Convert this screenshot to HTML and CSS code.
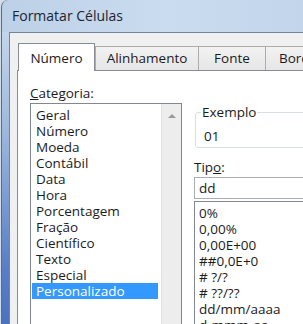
FILE: index.html
```html
<!DOCTYPE html>
<html lang="pt">
<head>
    <meta charset="UTF-8">
    <meta name="viewport" content="width=device-width, initial-scale=1.0">
    <title>Formatar Células</title>
    <link rel="stylesheet" href="styles.css">
</head>
<body>
    <div class="window">
        <div class="titlebar">Formatar Células</div>
        <div class="window-body">
            <div class="frame"></div>
            <div class="dialog">
                <div class="tabs">
                    <div class="tab tab-active">Número</div>
                    <div class="tab tab-align">Alinhamento</div>
                    <div class="tab tab-font">Fonte</div>
                    <div class="tab tab-border">Borda</div>
                </div>
                <div class="panel">
                    <div class="col-left">
                        <div class="label"><u>C</u>ategoria:</div>
                        <div class="listbox">
                            <ul class="items">
                                <li>Geral</li>
                                <li>Número</li>
                                <li>Moeda</li>
                                <li>Contábil</li>
                                <li>Data</li>
                                <li>Hora</li>
                                <li>Porcentagem</li>
                                <li>Fração</li>
                                <li>Científico</li>
                                <li>Texto</li>
                                <li>Especial</li>
                                <li class="selected">Personalizado</li>
                            </ul>
                            <div class="scrollbar"><span class="arrow-up"></span></div>
                        </div>
                    </div>
                    <div class="col-right">
                        <fieldset class="sample">
                            <legend>Exemplo</legend>
                            <div class="sample-value">01</div>
                        </fieldset>
                        <div class="label label-type">Tip<u>o</u>:</div>
                        <div class="type-input">dd</div>
                        <ul class="items type-list">
                            <li>0%</li>
                            <li>0,00%</li>
                            <li>0,00E+00</li>
                            <li>##0,0E+0</li>
                            <li># ?/?</li>
                            <li># ??/??</li>
                            <li>dd/mm/aaaa</li>
                            <li>d-mmm-aa</li>
                        </ul>
                    </div>
                </div>
            </div>
        </div>
    </div>
</body>
</html>
```

FILE: styles.css
```css
html, body {
    margin: 0;
    padding: 0;
}

body {
    width: 303px;
    height: 324px;
    overflow: hidden;
    background: #d3dde9;
    font-family: "Open Sans", sans-serif;
    font-size: 13.5px;
    color: #1b1b1b;
}

.window {
    height: 324px;
    margin-left: 1px;
    display: flex;
    flex-direction: column;
    border-left: 1px solid #5d6d80;
    border-top-left-radius: 7px;
    background: linear-gradient(90deg, #bcd0e7, #cadcef 55%, #c2d5eb);
    overflow: hidden;
}

.titlebar {
    flex: none;
    height: 32px;
    line-height: 32px;
    padding-left: 10px;
    font-size: 14px;
    color: #1c2530;
}

.window-body {
    flex: 1;
    display: flex;
    min-height: 0;
}

.frame {
    flex: none;
    width: 7px;
    background: linear-gradient(#c3d5ea, #9db6dc 35%, #5a7fc6 80%, #4b72c2);
}

.dialog {
    flex: 1;
    min-width: 0;
    display: flex;
    flex-direction: column;
    background: #f0f0f0;
    border-top: 1px solid #74849a;
    border-left: 1px solid #74849a;
    padding: 10px 0 0 7px;
    overflow: hidden;
}

/* tabs */
.tabs {
    flex: none;
    height: 27px;
    display: flex;
    align-items: flex-end;
    position: relative;
    z-index: 1;
}

.tab {
    flex: none;
    box-sizing: border-box;
    height: 24px;
    line-height: 23px;
    text-align: center;
    white-space: nowrap;
    border: 1px solid #acacac;
    border-bottom: none;
    margin-left: -1px;
    background: linear-gradient(#f2f2f2, #e6e6e6);
}

.tab-active {
    height: 28px;
    width: 77px;
    margin: 0 0 -1px 1px;
    padding-top: 3px;
    background: #fff;
    border-color: #898c95;
}

.tab-align {
    width: 104px;
    margin-left: 0;
}

.tab-font {
    width: 68px;
}

.tab-border {
    width: 66px;
    text-align: left;
    padding-left: 13px;
}

/* panel */
.panel {
    flex: 1;
    min-height: 0;
    display: flex;
    gap: 12px;
    padding: 14px 0 0 12px;
    background: #fff;
    border-top: 1px solid #898c95;
    border-left: 1px solid #898c95;
    overflow: hidden;
}

.label {
    line-height: 16px;
}

.col-left {
    flex: none;
    width: 152px;
}

.listbox {
    margin-top: 2px;
    height: 240px;
    display: flex;
    border: 1px solid #828790;
}

.items {
    list-style: none;
    margin: 0;
    padding: 3px 0 0 0;
}

.items li {
    line-height: 16px;
    padding-left: 4px;
    white-space: nowrap;
}

.listbox .items {
    flex: 1;
}

.listbox .items li {
    margin: 0 3px 0 1px;
}

.items li.selected {
    background: #3399ff;
    color: #fff;
}

.scrollbar {
    flex: none;
    width: 19px;
    background: #ededed;
    border-left: 1px solid #e2e2e2;
}

.arrow-up {
    display: block;
    width: 0;
    height: 0;
    margin: 10px auto 0;
    border-left: 4px solid transparent;
    border-right: 4px solid transparent;
    border-bottom: 4px solid #9a9a9a;
}

.col-right {
    flex: none;
    width: 200px;
    margin-top: 19px;
}

.sample {
    margin: 0 0 0 1px;
    padding: 8px 0 3px 8px;
    border: 1px solid #d5dfe6;
    border-radius: 3px;
}

.sample legend {
    padding: 0 1px;
    margin-left: -3px;
    line-height: 16px;
}

.sample-value {
    line-height: 16px;
}

.label-type {
    margin-top: 11px;
}

.type-input {
    margin-top: 2px;
    line-height: 16px;
    padding: 2px 4px;
    border: 1px solid #abadb3;
}

.type-list {
    margin-top: 2px;
    height: 200px;
    border: 1px solid #828790;
}
```
